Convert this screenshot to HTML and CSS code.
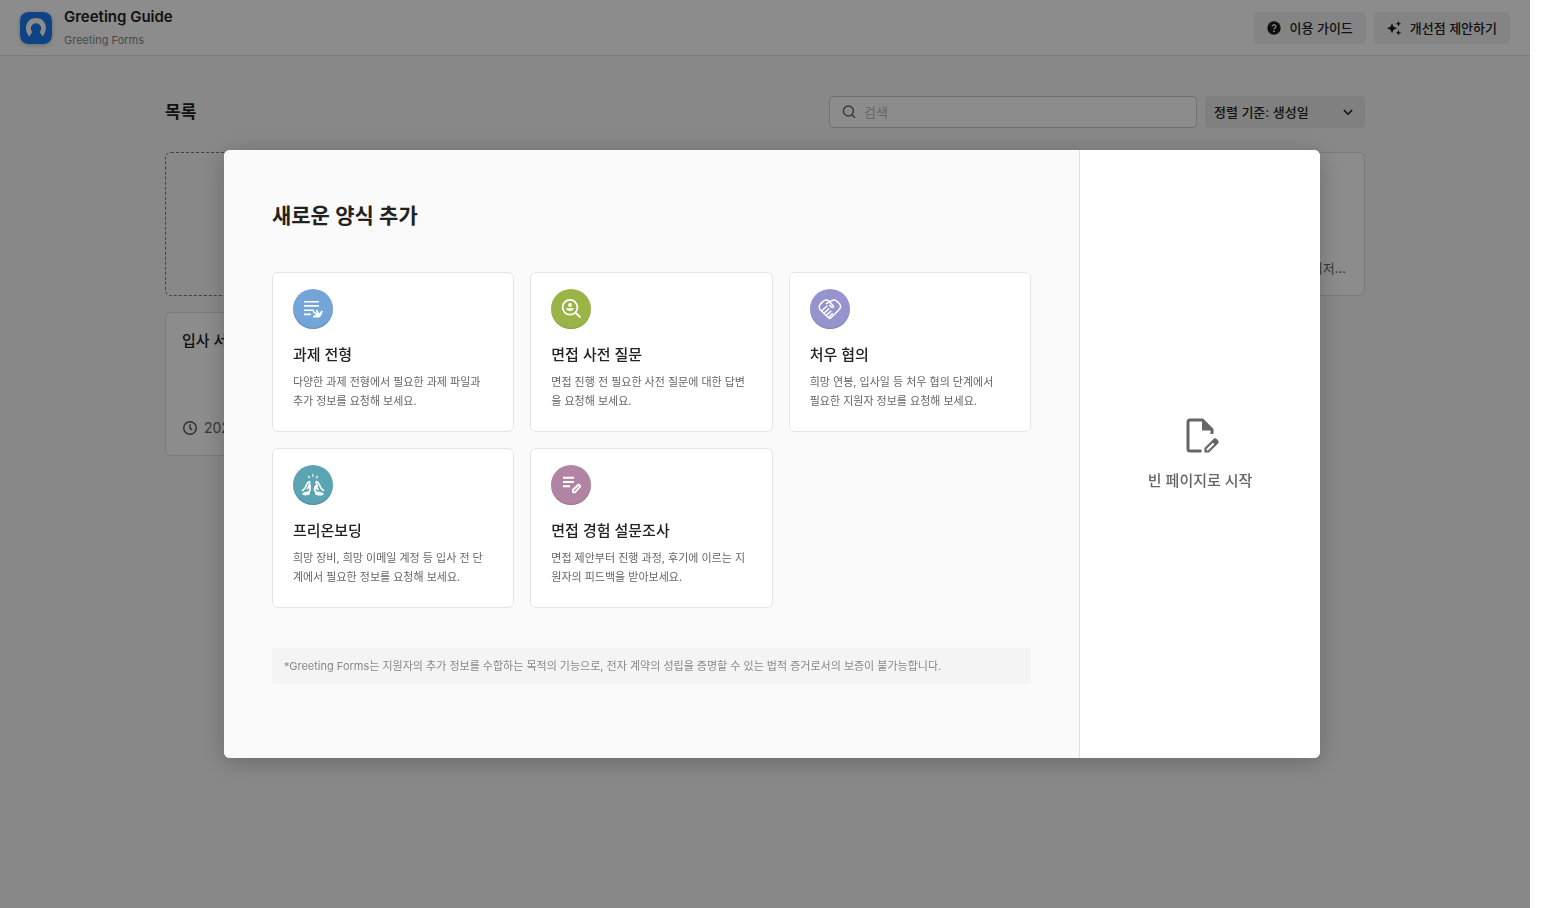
FILE: index.html
```html
<!DOCTYPE html>
<html lang="ko">
<head>
<meta charset="utf-8">
<title>Greeting Forms</title>
<link rel="stylesheet" href="styles.css">
</head>
<body>
<div class="page">
  <header class="topbar">
    <svg class="logo" viewBox="0 0 32 32" aria-hidden="true">
      <rect width="32" height="32" rx="8" fill="#1a7df0"/>
      <path d="M9.500 24.500C3 17.500 6 6 16 6s13 11.500 6.500 18.500l-2.700-4.500a5.200 5.200 0 1 0-7.600 0z" fill="#fff"/>
    </svg>
    <div class="brand">
      <div class="brand-name">Greeting Guide</div>
      <div class="brand-sub">Greeting Forms</div>
    </div>
    <button class="tool" type="button">
      <svg width="16" height="16" viewBox="0 0 16 16" aria-hidden="true"><circle cx="8" cy="8" r="6.700" fill="#1a1a1a"/><path d="M6.200 6.600a1.800 1.800 0 1 1 2.700 1.500c-.6.4-.9.6-.9 1.200" fill="none" stroke="#f1f1f1" stroke-width="1.300"/><circle cx="8" cy="11.200" r=".9" fill="#f1f1f1"/></svg>
      이용 가이드
    </button>
    <button class="tool" type="button">
      <svg width="16" height="16" viewBox="0 0 16 16" fill="#1a1a1a" aria-hidden="true"><path d="M6 3.200l1.500 3.500L11 8.200 7.500 9.700 6 13.200 4.500 9.700 1 8.200l3.500-1.500zM12.500 1l.8 1.900 1.900.8-1.900.8-.8 1.900-.8-1.900-1.900-.8 1.900-.8zM12.500 10l.8 1.900 1.900.8-1.900.8-.8 1.900-.8-1.900-1.900-.8 1.900-.8z"/></svg>
      개선점 제안하기
    </button>
  </header>
  <main class="content">
    <div class="list-head">
      <h1 class="list-title">목록</h1>
      <label class="search">
        <svg width="16" height="16" viewBox="0 0 16 16" fill="none" stroke="#666" stroke-width="1.400" aria-hidden="true"><circle cx="7.400" cy="7" r="5"/><path d="M11 10.700l3 3"/></svg>
        <input class="search-input" type="text" placeholder="검색" aria-label="검색">
      </label>
      <div class="sort">
        <select class="sort-select" aria-label="정렬 기준"><option>정렬 기준: 생성일</option></select>
        <svg class="sort-arrow" width="16" height="16" viewBox="0 0 16 16" fill="none" stroke="#1a1a1a" stroke-width="1.500" aria-hidden="true"><path d="M3.800 6l4.200 4.200L12.200 6"/></svg>
      </div>
    </div>
    <div class="forms">
      <div class="form-card form-new"></div>
      <div class="form-card"></div>
      <div class="form-card"></div>
      <div class="form-card"><div class="form-meta form-owner">매니저...</div></div>
      <div class="form-card">
        <div class="form-name">입사 서류</div>
        <div class="form-meta">
          <svg width="16" height="16" viewBox="0 0 16 16" fill="none" stroke="#555" stroke-width="1.400" aria-hidden="true"><circle cx="8" cy="8" r="6.300"/><path d="M8 4.300v4l2.200 1.500"/></svg>
          2023
        </div>
      </div>
    </div>
  </main>
</div>
<div class="backdrop"></div>
<div class="dialog-layer">
  <section class="dialog" role="dialog" aria-labelledby="dialog-title">
    <div class="templates">
      <h2 class="dialog-title" id="dialog-title">새로운 양식 추가</h2>
      <div class="grid">
        <button class="card" type="button">
          <svg class="badge blue" viewBox="0 0 40 40" fill="none" stroke="#fff" stroke-width="1.600" aria-hidden="true"><path d="M11 12.700h15M11 16.900h15M11 21.200h10M11 25.400h7"/><path d="M20 22.300l6 4.700M23.600 20.800l2.600 6M29 21.800l-2.800 5.600" stroke-width="1.700"/><path d="M20 28.500v-1.700l3.500-.8 1-2.500 2.500 1 1.700-2.800.8.500c-.3 3-1.700 6.300-4.500 6.300z" fill="#fff" stroke="none"/></svg>
          <span class="card-title">과제 전형</span>
          <span class="card-text">다양한 과제 전형에서 필요한 과제 파일과<br>추가 정보를 요청해 보세요.</span>
        </button>
        <button class="card" type="button">
          <svg class="badge green" viewBox="0 0 40 40" fill="none" stroke="#fff" stroke-width="1.800" aria-hidden="true"><circle cx="19" cy="18.300" r="7.400"/><path d="M24.300 23.500l5.200 5"/><circle cx="19" cy="16" r="1.900" fill="#fff" stroke="none"/><path d="M15 19.300h8c-.6 2-2.200 2.700-4 2.700s-3.400-.7-4-2.700z" fill="#fff" stroke="none"/></svg>
          <span class="card-title">면접 사전 질문</span>
          <span class="card-text">면접 진행 전 필요한 사전 질문에 대한 답변<br>을 요청해 보세요.</span>
        </button>
        <button class="card" type="button">
          <svg class="badge violet" viewBox="0 0 40 40" fill="none" stroke="#fff" stroke-width="1.500" stroke-linejoin="round" stroke-linecap="round" aria-hidden="true"><path d="M10 20.500c-1.300-2-.8-4.300.8-5.900l2-2c1.700-1.700 4.500-1.900 6.500-.5l.8.700 1-.7c2-1.400 4.500-1.200 6.200.5l1.700 1.700c1.900 1.900 1.900 4.500 0 6.400l-8 8c-.8.8-1.800.8-2.500.1L10 20.500z"/><path d="M16.500 14.500l2.800-1.700 4.200 4.200c.3 1.300-.9 1.800-1.800 1.200l-2-1.800M12 21.500l5-4.500M14.200 24l4.600-4.300M16.400 26.200l4.400-4M18.700 28.200l3.600-3.500"/></svg>
          <span class="card-title">처우 협의</span>
          <span class="card-text">희망 연봉, 입사일 등 처우 협의 단계에서<br>필요한 지원자 정보를 요청해 보세요.</span>
        </button>
        <button class="card" type="button">
          <svg class="badge teal" viewBox="0 0 40 40" fill="none" stroke="#fff" stroke-width="1.700" stroke-linecap="round" stroke-linejoin="round" aria-hidden="true"><path d="M9.500 25.500c2.300-1.400 3.300-3.300 4-5.500.7-1.900 1.600-3.300 3-3.500 1 1.300-.2 3-.9 5M14.500 23.500l2.500-3.300v4.500c0 1.900-1.200 2.500-3 2.800-1.500.2-2.500.2-3.800 1.300 1.600 1.200 4.600.8 6-.3"/><path d="M30.500 25.500c-2.300-1.400-3.300-3.300-4-5.500-.7-1.900-1.600-3.300-3-3.500-1 1.300.2 3 .9 5M25 24.500l-2.700-3.300c-.8 2-.9 4.400.2 5.500 1.500 1.300 4.500.6 7.300 2.300-2 1.300-5.500.7-7-.3"/><path d="M15.500 11.200l.8 1.600M19.800 9.500v1.700M24.300 11.200l-.8 1.600" stroke-width="1.200"/></svg>
          <span class="card-title">프리온보딩</span>
          <span class="card-text">희망 장비, 희망 이메일 계정 등 입사 전 단<br>계에서 필요한 정보를 요청해 보세요.</span>
        </button>
        <button class="card" type="button">
          <svg class="badge plum" viewBox="0 0 40 40" fill="none" stroke="#fff" stroke-width="1.900" aria-hidden="true"><path d="M12 12.800h11M12 17h11M12 21.200h7"/><path d="M22 27.300v-2.500l4.700-4.500c.6-.6 1.300-.5 1.900 0s.6 1.300 0 1.900L24 27.300z" stroke-linejoin="round"/></svg>
          <span class="card-title">면접 경험 설문조사</span>
          <span class="card-text">면접 제안부터 진행 과정, 후기에 이르는 지<br>원자의 피드백을 받아보세요.</span>
        </button>
      </div>
      <p class="note">*Greeting Forms는 지원자의 추가 정보를 수합하는 목적의 기능으로, 전자 계약의 성립을 증명할 수 있는 법적 증거로서의 보증이 불가능합니다.</p>
    </div>
    <button class="blank" type="button">
      <svg width="40" height="40" viewBox="0 0 40 40" fill="none" stroke="#666" stroke-width="3" aria-hidden="true"><path d="M21.500 35H10a2 2 0 0 1-2-2V6a2 2 0 0 1 2-2h12.500l9.500 9.500V18" stroke-linejoin="round"/><path d="M22 3v11.500h11.500z" fill="#666" stroke="none"/><path d="M25.500 35.500v-3l8.500-8.500c.7-.7 1.500-.6 2.200 0l.8.8c.7.700.7 1.500 0 2.200l-8.500 8.500z" stroke-width="2.200"/><path d="M31.500 25.500l3-3 4 3.500-3 3.300z" fill="#666" stroke="none"/></svg>
      빈 페이지로 시작
    </button>
  </section>
</div>
</body>
</html>
```
FILE: styles.css
```css
* { box-sizing: border-box; }
body {
  margin: 0;
  padding-right: 14px;
  background: #fff;
  color: #222;
  font-family: Inter, "Noto Sans CJK KR", sans-serif;
  font-size: 13px;
}
button, input, select { font: inherit; color: inherit; }
button { border: 0; cursor: pointer; }
h1, h2, p { margin: 0; }
svg { flex: none; }

.page { min-height: 100vh; background: #f8f8f8; }
.topbar {
  display: flex;
  align-items: center;
  gap: 8px;
  height: 56px;
  padding: 0 20px;
  background: #fff;
  border-bottom: 1px solid #e0e0e0;
}
.logo { width: 32px; height: 32px; border-radius: 8px; box-shadow: 0 1px 4px rgba(0, 0, 0, .25); }
.brand { flex: 1; padding-left: 4px; }
.brand-name { font-size: 15px; font-weight: 600; line-height: 24px; }
.brand-sub { font-size: 11px; line-height: 22px; color: #888; }
.tool {
  display: flex;
  align-items: center;
  gap: 8px;
  height: 32px;
  padding: 0 13px 0 12px;
  border-radius: 4px;
  background: #f1f1f1;
  font-weight: 500;
}

.content { max-width: 1200px; margin: 0 auto; padding: 40px 0; }
.list-head { display: flex; align-items: center; gap: 8px; margin-bottom: 24px; }
.list-title { flex: 1; font-size: 17px; line-height: 24px; font-weight: 600; }
.search {
  display: flex;
  align-items: center;
  gap: 7px;
  width: 368px;
  height: 32px;
  padding: 0 11px;
  border: 1px solid #ccc;
  border-radius: 4px;
  background: #fff;
}
.search-input { flex: 1; min-width: 0; padding: 0; border: 0; outline: 0; background: none; }
.search-input::placeholder { color: #bbb; }
.sort { position: relative; width: 160px; }
.sort-select {
  width: 100%;
  height: 32px;
  padding: 0 32px 0 9px;
  border: 0;
  border-radius: 4px;
  background: #e9e9e9;
  appearance: none;
  font-weight: 500;
}
.sort-arrow { position: absolute; right: 9px; top: 8px; pointer-events: none; }

.forms { display: grid; grid-template-columns: repeat(4, 1fr); gap: 16px; }
.form-card {
  display: flex;
  flex-direction: column;
  justify-content: space-between;
  min-height: 144px;
  padding: 16px;
  border: 1px solid #e0e0e0;
  border-radius: 6px;
  background: #fff;
}
.form-new { border: 1px dashed #777; background: none; }
.form-name { font-size: 15px; line-height: 24px; font-weight: 500; }
.form-meta { display: flex; align-items: center; gap: 6px; font-size: 14px; line-height: 22px; color: #666; }
.form-owner { justify-content: flex-end; margin-top: auto; padding-right: 2px; font-size: 13px; }

.backdrop { position: fixed; inset: 0 14px 0 0; background: rgba(0, 0, 0, .45); }
.dialog-layer { position: fixed; inset: 0; display: flex; align-items: center; justify-content: center; }
.dialog {
  display: flex;
  width: 71%;
  border-radius: 6px;
  overflow: hidden;
  background: #fff;
  box-shadow: 0 4px 24px rgba(0, 0, 0, .24);
}
.templates { flex: 1; padding: 48px 48px 74px; background: #fafafa; border-right: 1px solid #e0e0e0; }
.dialog-title { margin-bottom: 38px; font-size: 21px; line-height: 36px; font-weight: 600; }
.grid { display: grid; grid-template-columns: repeat(3, 1fr); gap: 16px; }
.card {
  display: flex;
  flex-direction: column;
  align-items: flex-start;
  padding: 16px 20px 20px;
  border: 1px solid #e4e4e4;
  border-radius: 6px;
  background: #fff;
  text-align: left;
}
.badge { width: 40px; height: 40px; margin-bottom: 13px; border-radius: 50%; box-shadow: inset 0 -1px 1px rgba(0, 0, 0, .15); }
.blue { background: #74a5d8; }
.green { background: #9ab545; }
.violet { background: #9694ce; }
.teal { background: #5ba5b2; }
.plum { background: #b284a3; }
.card-title { margin-bottom: 5px; font-size: 15px; line-height: 26px; font-weight: 500; }
.card-text { font-size: 11px; line-height: 19px; color: #666; white-space: nowrap; }
.note { margin-top: 40px; padding: 8px 12px; border-radius: 2px; background: #f4f4f4; font-size: 11px; line-height: 20px; color: #888; }
.blank {
  display: flex;
  flex-direction: column;
  align-items: center;
  justify-content: center;
  gap: 13px;
  width: 240px;
  background: #fff;
  color: #666;
  font-size: 15px;
  line-height: 24px;
  font-weight: 500;
}
```
